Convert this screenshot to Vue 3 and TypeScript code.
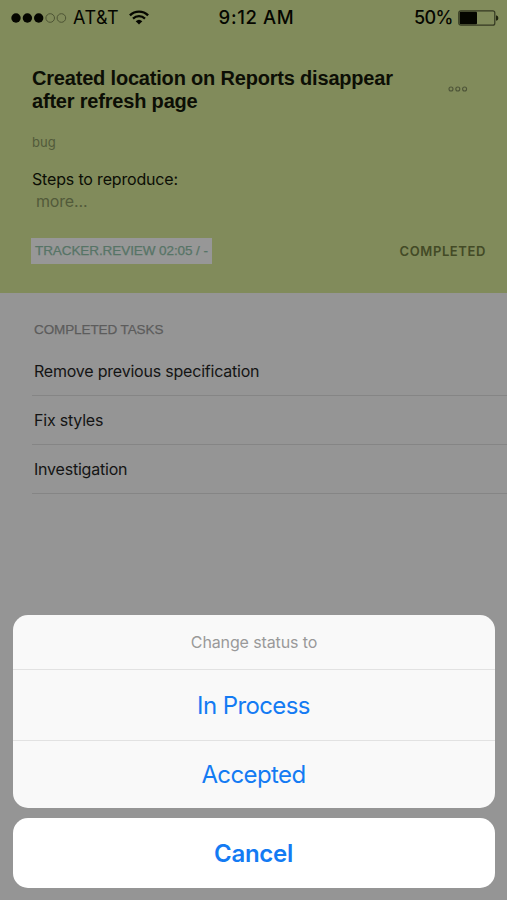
<script setup lang="ts">
import { ref } from 'vue'

interface Task {
  id: number
  title: string
}

const tasks = ref<Task[]>([
  { id: 1, title: 'Remove previous specification' },
  { id: 2, title: 'Fix styles' },
  { id: 3, title: 'Investigation' },
])

const actions: { label: string; name: string }[] = [
  { label: 'In Process', name: 'process' },
  { label: 'Accepted', name: 'accepted' },
]
</script>

<template>
  <div class="screen">
    <section class="card">
      <div class="status-bar">
        <div class="carrier">
          <svg class="signal" width="56" height="12" viewBox="0 0 56 12">
            <circle cx="5" cy="6" r="4.7" fill="#050600" />
            <circle cx="16.4" cy="6" r="4.7" fill="#050600" />
            <circle cx="27.7" cy="6" r="4.7" fill="#050600" />
            <circle cx="39.2" cy="6" r="4.3" fill="none" stroke="#4d5434" />
            <circle cx="50.4" cy="6" r="4.3" fill="none" stroke="#4d5434" />
          </svg>
          <span class="carrier-name">AT&amp;T</span>
          <svg class="wifi" width="20" height="15" viewBox="0 0 20 15">
            <path d="M.9 5.3a13 13 0 0 1 18.2 0" fill="none" stroke="#050600" stroke-width="2.4" />
            <path d="M4 8.6a8.6 8.6 0 0 1 12 0" fill="none" stroke="#050600" stroke-width="2.2" />
            <path d="M10 14.6 6.7 11.3a4.8 4.8 0 0 1 6.6 0z" fill="#050600" />
          </svg>
        </div>
        <span class="clock">9:12 AM</span>
        <div class="power">
          <span class="percent">50%</span>
          <svg class="battery" width="41" height="16" viewBox="0 0 41 16">
            <rect x=".8" y=".8" width="36" height="14.4" rx="2" fill="none" stroke="#343922" stroke-width="1.2" />
            <rect x="1.7" y="1.8" width="17.3" height="12.4" rx="1" fill="#050600" />
            <path d="M38 5.2q2.4.4 2.4 2.8t-2.4 2.8z" fill="#20240f" />
          </svg>
        </div>
      </div>

      <div class="heading">
        <h1 class="title"><span class="line">Created location on Reports disappear</span> <span class="line">after refresh page</span></h1>
        <svg class="dots" width="20" height="6" viewBox="0 0 20 6">
          <g fill="none" stroke="#4d5438" stroke-width="1.1">
            <circle cx="3" cy="3" r="2" />
            <circle cx="9.8" cy="3" r="2" />
            <circle cx="16.6" cy="3" r="2" />
          </g>
        </svg>
      </div>
      <div class="tag">bug</div>
      <div class="steps">Steps to reproduce:</div>
      <div class="more">more...</div>
      <div class="card-footer">
        <span class="tracker">TRACKER.REVIEW 02:05 / -</span>
        <span class="state">COMPLETED</span>
      </div>
    </section>

    <section class="tasks">
      <h2 class="tasks-title">COMPLETED TASKS</h2>
      <ul class="task-list">
        <li v-for="task in tasks" :key="task.id" class="task">{{ task.title }}</li>
      </ul>
    </section>

    <div class="sheet">
      <div class="sheet-group">
        <div class="sheet-title">Change status to</div>
        <button v-for="action in actions" :key="action.name" type="button" :class="['action', action.name]">
          {{ action.label }}
        </button>
      </div>
      <button type="button" class="cancel">Cancel</button>
    </div>
  </div>
</template>

<style>
body {
  background: #959595;
}
</style>

<style scoped>
.screen {
  position: relative;
  height: 900px;
  overflow: hidden;
  background: #959595;
  color: #141414;
  font-family: Inter, "Liberation Sans", sans-serif;
}
.screen span {
  white-space: nowrap;
}
.card {
  box-sizing: border-box;
  height: 293px;
  background: #818b5b;
  color: #0c0e05;
}
.status-bar {
  display: grid;
  grid-template-columns: 1fr auto 1fr;
  align-items: center;
  height: 35px;
  padding: 0 8px 0 11px;
  font-size: 18px;
  line-height: 35px;
  color: #050600;
}
.carrier,
.power {
  display: flex;
  align-items: center;
}
.signal {
  margin-right: 6px;
}
.carrier-name {
  letter-spacing: 0.5px;
}
.wifi {
  margin-left: 10px;
}
.clock {
  padding-left: 3px;
  font-weight: 500;
  font-size: 18.5px;
  letter-spacing: 0.65px;
}
.power {
  justify-content: flex-end;
}
.percent {
  font-weight: 500;
  letter-spacing: -0.5px;
}
.battery {
  margin-left: 5px;
}
.heading {
  display: flex;
  justify-content: space-between;
  padding: 32px 39px 0 32px;
}
.title {
  margin: 0;
  font: bold 20px/23px "Liberation Sans", sans-serif;
  letter-spacing: -0.19px;
}
.line {
  display: block;
}
.dots {
  margin-top: 19px;
}
.tag {
  margin: 19px 0 0 32px;
  font-size: 13px;
  line-height: 20px;
  color: #525a3a;
}
.steps {
  margin: 17px 0 0 32px;
  font-size: 16px;
  line-height: 21px;
  letter-spacing: -0.17px;
}
.more {
  margin-left: 36px;
  font-size: 16px;
  line-height: 23px;
  letter-spacing: -0.17px;
  color: #525a3a;
}
.card-footer {
  display: flex;
  align-items: center;
  justify-content: space-between;
  margin-top: 25px;
  padding: 0 21px 0 31px;
}
.tracker {
  box-sizing: border-box;
  width: 181px;
  height: 26px;
  padding-left: 4px;
  background: #979797;
  color: #567466;
  font: 13.5px/26px "Liberation Sans", sans-serif;
  letter-spacing: -0.08px;
  -webkit-text-stroke: 0.25px #567466;
}
.state {
  font-size: 13px;
  font-weight: 600;
  color: #434a26;
  letter-spacing: 0.6px;
}
.tasks {
  padding: 27px 0 0 32px;
}
.tasks-title {
  margin: 0 0 0 2px;
  font: 13.5px/20px "Liberation Sans", sans-serif;
  letter-spacing: -0.1px;
  color: #5c5c5c;
  -webkit-text-stroke: 0.25px #5c5c5c;
}
.task-list {
  margin: 7px 0 0;
  padding: 0;
  list-style: none;
}
.task {
  box-sizing: border-box;
  height: 49px;
  padding-left: 2px;
  border-bottom: 1px solid #858585;
  font-size: 16px;
  line-height: 49px;
  letter-spacing: -0.21px;
}
.sheet {
  position: absolute;
  left: 13px;
  right: 12px;
  top: 615px;
  display: flex;
  flex-direction: column;
  gap: 10px;
}
.sheet-group {
  overflow: hidden;
  border-radius: 15px;
  background: #f9f9f9;
}
.sheet-title {
  height: 54px;
  text-align: center;
  font-size: 16px;
  line-height: 55px;
  letter-spacing: -0.12px;
  color: #999;
}
.action,
.cancel {
  box-sizing: border-box;
  display: block;
  width: 100%;
  margin: 0;
  padding: 0 1px 0 0;
  border: 0;
  background: transparent;
  color: #147bf3;
  font: 24px/70px Inter, "Liberation Sans", sans-serif;
  letter-spacing: -0.6px;
  text-align: center;
}
.action {
  height: 68px;
  border-top: 1px solid #e2e2e2;
  line-height: 68px;
}
.action.process {
  height: 71px;
  line-height: 71px;
}
.cancel {
  height: 70px;
  padding-top: 1px;
  border-radius: 15px;
  background: #fff;
  font-weight: 600;
  line-height: 70px;
  letter-spacing: -0.3px;
}
</style>
